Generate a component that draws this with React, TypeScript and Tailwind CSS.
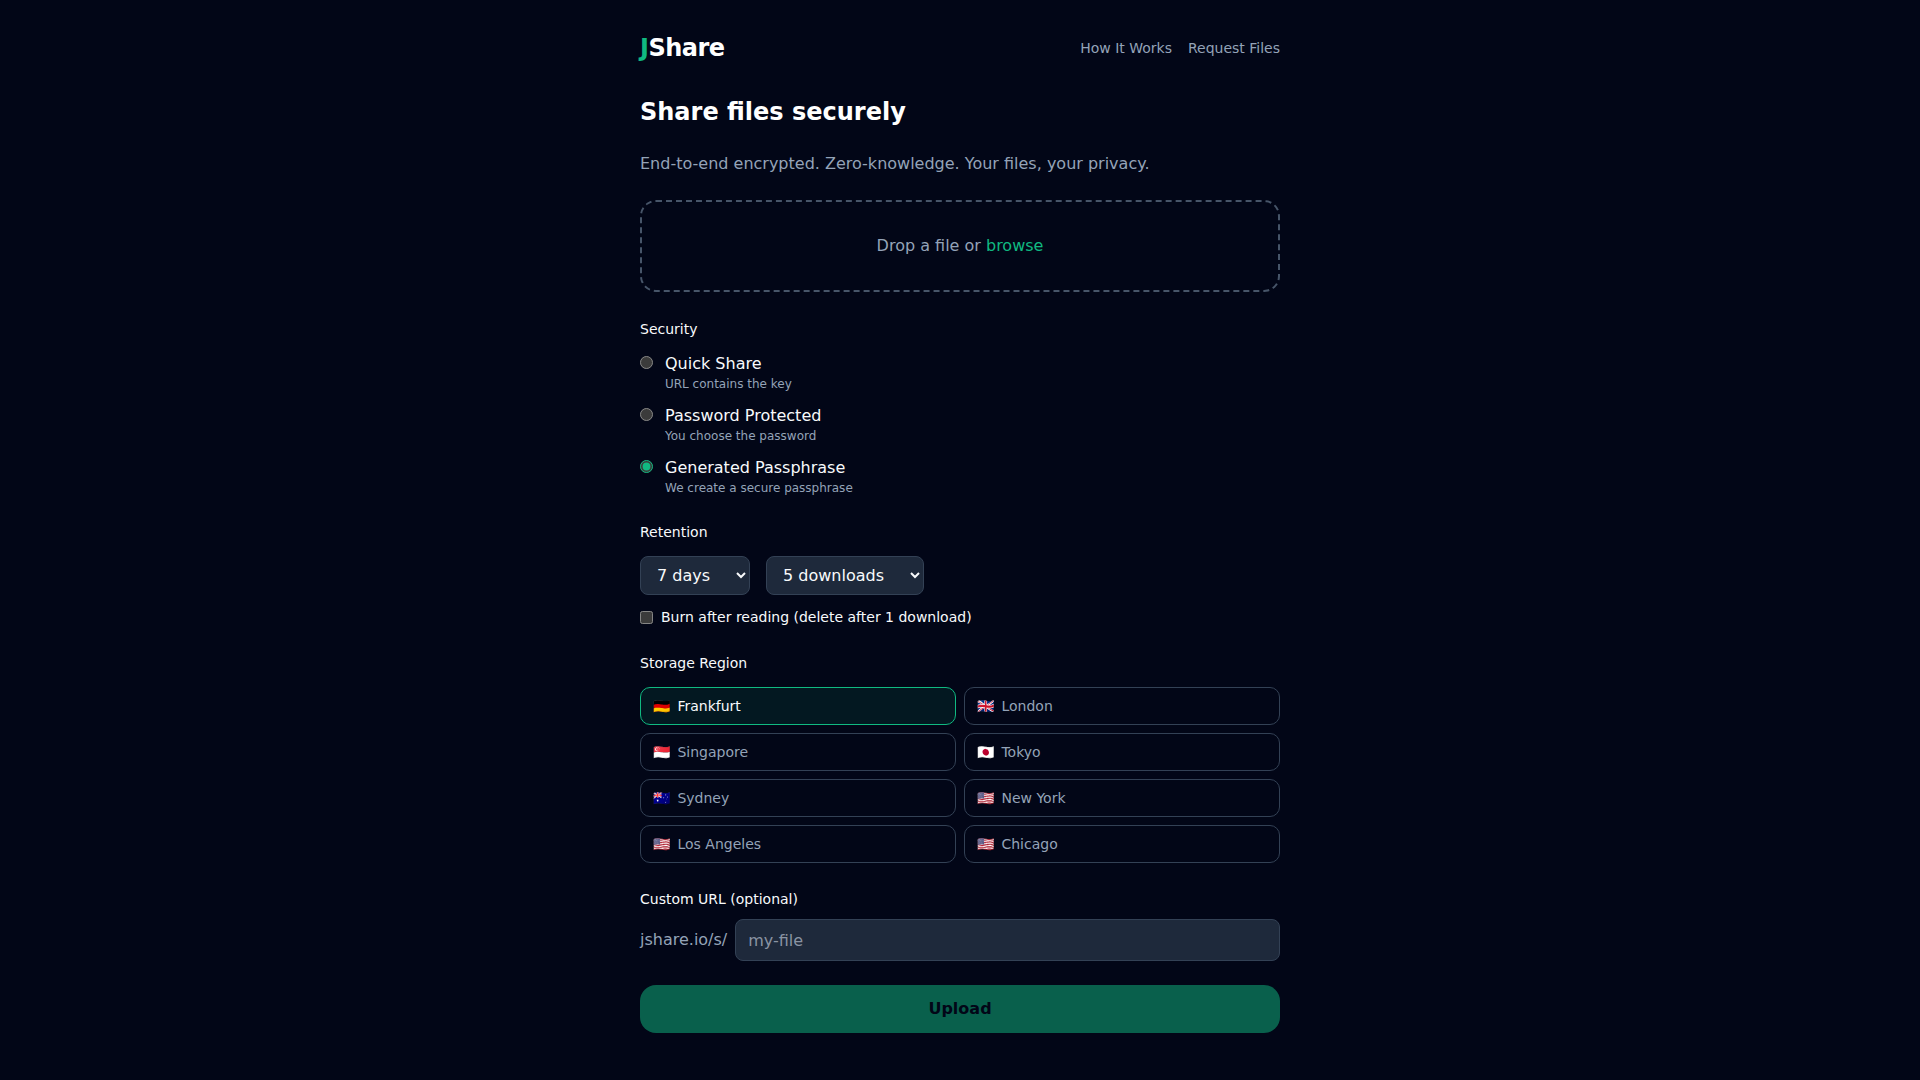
import React from "react";

const font = { fontFamily: '"DejaVu Sans", "Noto Color Emoji", sans-serif' };

const securityOptions = [
  { title: "Quick Share", hint: "URL contains the key" },
  { title: "Password Protected", hint: "You choose the password" },
  { title: "Generated Passphrase", hint: "We create a secure passphrase", checked: true },
];

const regions = [
  { flag: "🇩🇪", name: "Frankfurt", active: true },
  { flag: "🇬🇧", name: "London" },
  { flag: "🇸🇬", name: "Singapore" },
  { flag: "🇯🇵", name: "Tokyo" },
  { flag: "🇦🇺", name: "Sydney" },
  { flag: "🇺🇸", name: "New York" },
  { flag: "🇺🇸", name: "Los Angeles" },
  { flag: "🇺🇸", name: "Chicago" },
];

export default function App() {
  return (
    <div style={font} className="min-h-screen bg-[#020617] text-[#f8fafc] [color-scheme:dark]">
      <div className="mx-auto w-[640px]">
        {/* Header */}
        <header className="flex items-center justify-between pt-[32px] pb-[32px]">
          <div className="text-2xl leading-[32px] font-bold text-white tracking-[-0.5px]">
            <span className="text-[#10b981]">J</span>Share
          </div>
          <nav className="flex gap-4 text-sm text-[#94a3b8]">
            <span>How It Works</span>
            <span>Request Files</span>
          </nav>
        </header>

        <h1 className="text-2xl leading-[32px] font-bold text-white mb-6">Share files securely</h1>
        <p className="text-base leading-[24px] text-[#94a3b8] mb-6">
          End-to-end encrypted. Zero-knowledge. Your files, your privacy.
        </p>

        {/* Drop zone */}
        <div className="h-[92px] flex items-center justify-center rounded-2xl border-2 border-dashed border-[#475569] text-[#94a3b8] mb-[26px]">
          <span>
            Drop a file or <span className="text-[#10b981]">browse</span>
          </span>
        </div>

        {/* Security */}
        <div className="text-sm leading-[22px] mb-3">Security</div>
        <div className="flex flex-col gap-3 mb-[25px]">
          {securityOptions.map((opt) => (
            <label key={opt.title} className="flex items-start gap-3">
              <input
                type="radio"
                name="security"
                defaultChecked={opt.checked}
                className="m-0 mt-[4px] w-[13px] h-[13px] accent-[#10b981]"
              />
              <span className="flex flex-col">
                <span className="text-base leading-[24px]">{opt.title}</span>
                <span className="text-xs leading-[16px] text-[#94a3b8]">{opt.hint}</span>
              </span>
            </label>
          ))}
        </div>

        {/* Retention */}
        <div className="text-sm leading-[22px] mb-[13px]">Retention</div>
        <div className="flex gap-4 mb-3">
          <select className="h-[39px] rounded-lg border border-[#334155] bg-[#1e293b] pl-3 pr-[22px] text-base text-[#f8fafc]">
            <option>7 days</option>
          </select>
          <select className="h-[39px] rounded-lg border border-[#334155] bg-[#1e293b] pl-3 pr-[23px] text-base text-[#f8fafc]">
            <option>5 downloads</option>
          </select>
        </div>
        <label className="flex items-center gap-2 text-sm leading-[20px] mb-[25px]">
          <input type="checkbox" className="m-0 w-[13px] h-[13px]" />
          Burn after reading (delete after 1 download)
        </label>

        {/* Storage region */}
        <div className="text-sm leading-[22px] mb-[13px]">Storage Region</div>
        <div className="grid grid-cols-2 gap-2 mb-[25px]">
          {regions.map((r) => (
            <div
              key={r.name}
              className={
                r.active
                  ? "h-[38px] flex items-center gap-[7px] rounded-[10px] border border-[#10b981] bg-[#10b981]/10 px-3 text-sm text-[#f8fafc]"
                  : "h-[38px] flex items-center gap-[7px] rounded-[10px] border border-[#334155] px-3 text-sm text-[#94a3b8]"
              }
            >
              <span>{r.flag}</span>
              <span>{r.name}</span>
            </div>
          ))}
        </div>

        {/* Custom URL */}
        <div className="text-sm leading-[22px] mb-[9px]">Custom URL (optional)</div>
        <div className="flex items-center gap-2 mb-[24px]">
          <span className="text-base text-[#94a3b8]">jshare.io/s/</span>
          <input
            placeholder="my-file"
            className="flex-1 h-[42px] rounded-lg border border-[#334155] bg-[#1e293b] px-3 text-base text-[#f8fafc] placeholder:text-[#8a94a3]"
          />
        </div>

        <button className="w-full h-[48px] rounded-2xl bg-[#10b981] opacity-50 text-base font-semibold text-[#020617]">
          Upload
        </button>
      </div>
    </div>
  );
}
